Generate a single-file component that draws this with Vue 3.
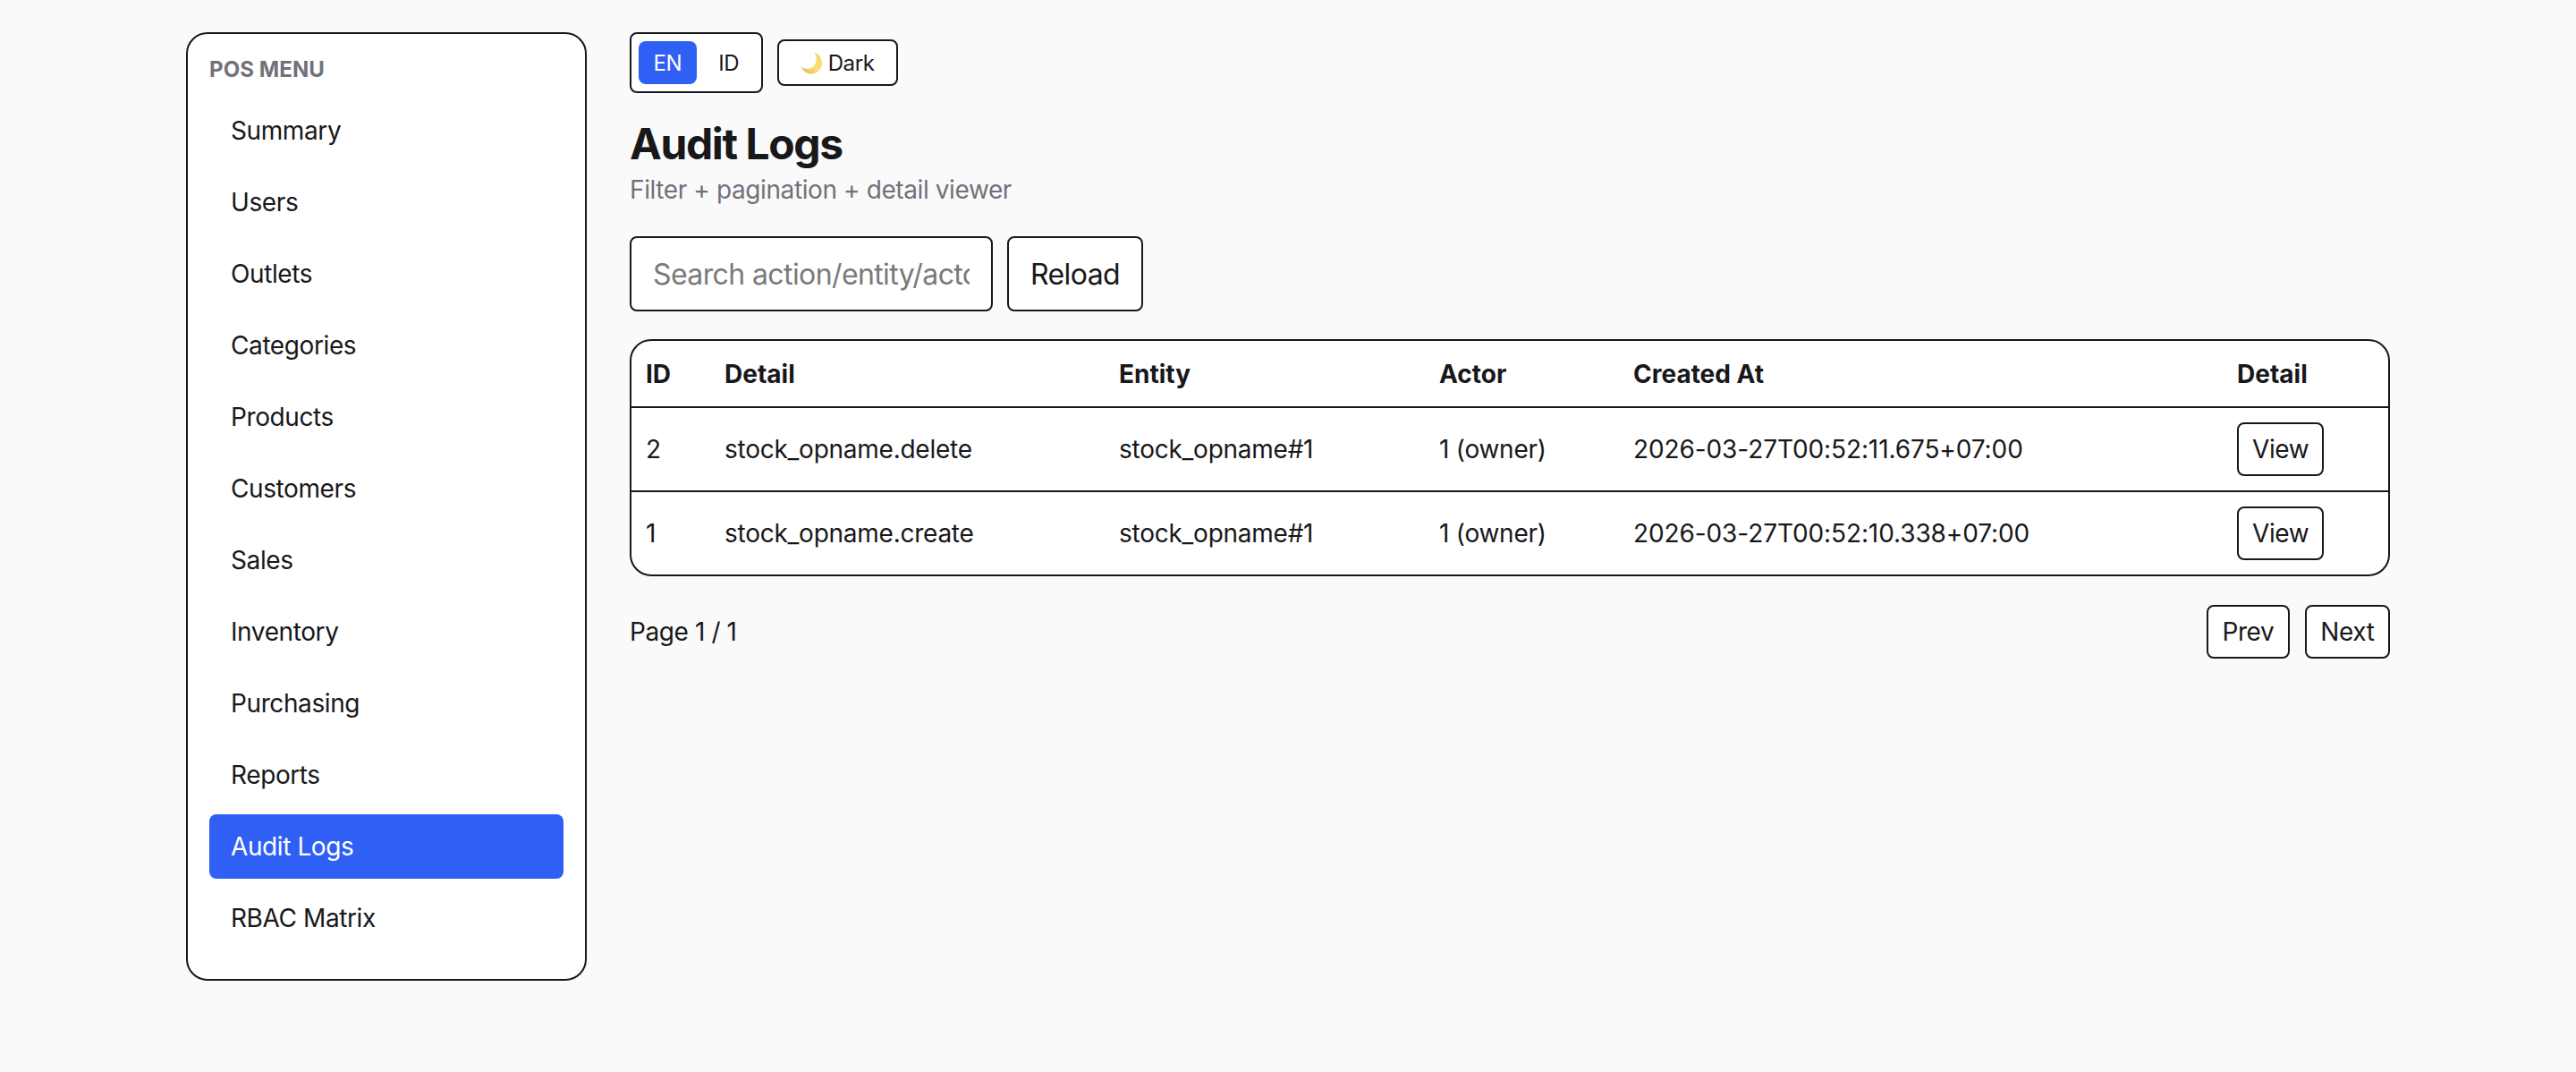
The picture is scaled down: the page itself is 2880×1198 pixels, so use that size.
<script setup>
const navItems = ['Summary', 'Users', 'Outlets', 'Categories', 'Products', 'Customers', 'Sales', 'Inventory', 'Purchasing', 'Reports', 'Audit Logs', 'RBAC Matrix']
const logs = [
  { id: 2, action: 'stock_opname.delete', entity: 'stock_opname#1', actor: '1 (owner)', created: '2026-03-27T00:52:11.675+07:00' },
  { id: 1, action: 'stock_opname.create', entity: 'stock_opname#1', actor: '1 (owner)', created: '2026-03-27T00:52:10.338+07:00' }
]
</script>

<template>
  <div class="layout">
    <aside class="sidebar">
      <div class="menu-title">POS MENU</div>
      <nav class="nav">
        <a v-for="item in navItems" :key="item" class="nav-item" :class="{ active: item === 'Audit Logs' }">{{ item }}</a>
      </nav>
    </aside>

    <main class="main">
      <div class="toolbar">
        <div class="lang">
          <button class="lang-btn active">EN</button>
          <button class="lang-btn">ID</button>
        </div>
        <button class="theme-btn">
          <svg class="moon" width="24" height="25" viewBox="0 0 24 25">
            <defs>
              <linearGradient id="moonFill" x1="0.8" y1="0.1" x2="0.3" y2="1">
                <stop offset="0" stop-color="#f3d769" />
                <stop offset="0.6" stop-color="#f8e07c" />
                <stop offset="1" stop-color="#e9bf4c" />
              </linearGradient>
            </defs>
            <path d="M15.5 0.5 C20.5 2 24 7 24 12.5 C24 19 18.5 24.5 12 24.5 C7 24.5 2.5 21 0.5 16.5 C4 19 9.5 20 13.5 17 C18 13.5 19 6 15.5 0.5 Z" fill="url(#moonFill)" />
          </svg>
          <span>Dark</span>
        </button>
      </div>

      <h1 class="title">Audit Logs</h1>
      <p class="subtitle">Filter + pagination + detail viewer</p>

      <div class="filters">
        <input class="search" type="text" placeholder="Search action/entity/actor" />
        <button class="reload">Reload</button>
      </div>

      <div class="table-wrap">
        <table class="table">
          <colgroup>
            <col class="c-id" />
            <col class="c-action" />
            <col class="c-entity" />
            <col class="c-actor" />
            <col class="c-created" />
            <col />
          </colgroup>
          <thead>
            <tr>
              <th>ID</th>
              <th>Detail</th>
              <th>Entity</th>
              <th>Actor</th>
              <th>Created At</th>
              <th>Detail</th>
            </tr>
          </thead>
          <tbody>
            <tr v-for="log in logs" :key="log.id">
              <td>{{ log.id }}</td>
              <td>{{ log.action }}</td>
              <td>{{ log.entity }}</td>
              <td>{{ log.actor }}</td>
              <td class="created">{{ log.created }}</td>
              <td><button class="small-btn view">View</button></td>
            </tr>
          </tbody>
        </table>
      </div>

      <div class="pager">
        <span>Page 1 / 1</span>
        <div class="pager-btns">
          <button class="small-btn">Prev</button>
          <button class="small-btn">Next</button>
        </div>
      </div>
    </main>
  </div>
</template>

<style>
html, body {
  background: #fafafa;
}
</style>

<style scoped>
.layout {
  display: flex;
  gap: 48px;
  align-items: flex-start;
  width: 2464px;
  margin: 0 auto;
  padding-top: 36px;
  font-family: Inter, "Liberation Sans", sans-serif;
  font-size: 28px;
  letter-spacing: -0.4px;
  color: #18181b;
}

.sidebar {
  flex: 0 0 448px;
  box-sizing: border-box;
  height: 1060px;
  padding: 24px;
  background: #fff;
  border: 2px solid #18181b;
  border-radius: 24px;
}

.menu-title {
  margin-bottom: 16px;
  font-size: 24px;
  line-height: 32px;
  font-weight: 700;
  letter-spacing: 0.1px;
  color: #71717a;
}

.nav {
  display: flex;
  flex-direction: column;
  gap: 8px;
}

.nav-item {
  height: 72px;
  padding: 0 24px;
  line-height: 72px;
  border-radius: 8px;
}

.nav-item.active {
  background: #2f5ff5;
  color: #fff;
}

.main {
  flex: 1;
  min-width: 0;
}

.toolbar {
  display: flex;
  align-items: center;
  gap: 16px;
}

.lang {
  display: flex;
  gap: 8px;
  padding: 8px;
  background: #fff;
  border: 2px solid #18181b;
  border-radius: 8px;
}

button {
  font-family: inherit;
  letter-spacing: inherit;
  color: inherit;
  cursor: pointer;
}

.lang-btn {
  height: 48px;
  padding: 0 16.5px;
  border: none;
  border-radius: 8px;
  background: transparent;
  font-size: 24px;
}

.lang-btn.active {
  background: #2f5ff5;
  color: #fff;
}

.theme-btn {
  display: flex;
  align-items: center;
  gap: 7px;
  height: 52px;
  padding: 0 25px 0 24px;
  background: #fff;
  border: 2px solid #18181b;
  border-radius: 8px;
  font-size: 24px;
}

.title {
  margin: 29px 0 0;
  font-size: 48px;
  line-height: 56px;
  font-weight: 700;
  letter-spacing: -1.4px;
}

.subtitle {
  margin: 5px 0 0;
  font-size: 28px;
  line-height: 36px;
  color: #71717a;
}

.filters {
  display: flex;
  gap: 16px;
  margin-top: 34px;
}

.search {
  box-sizing: border-box;
  width: 406px;
  height: 84px;
  padding: 0 24px;
  background: #fff;
  border: 2px solid #18181b;
  border-radius: 8px;
  font-family: inherit;
  font-size: 32px;
  letter-spacing: -0.6px;
}

.search::placeholder {
  color: #7a7a7a;
}

.reload {
  height: 84px;
  padding: 0 24px;
  background: #fff;
  border: 2px solid #18181b;
  border-radius: 8px;
  font-size: 32px;
  letter-spacing: -0.6px;
}

.table-wrap {
  margin-top: 31px;
  background: #fff;
  border: 2px solid #18181b;
  border-radius: 24px;
  overflow: hidden;
}

.table {
  width: 100%;
  border-collapse: collapse;
  table-layout: fixed;
}

.c-id { width: 88px; }
.c-action { width: 441px; }
.c-entity { width: 358px; }
.c-actor { width: 217px; }
.c-created { width: 675px; }

th, td {
  padding: 0 16px;
  text-align: left;
}

th {
  height: 73px;
  font-weight: 700;
  letter-spacing: 0;
}

td {
  height: 92px;
  border-top: 2px solid #18181b;
  letter-spacing: -0.25px;
}

td.created {
  letter-spacing: -0.1px;
}

.small-btn {
  height: 60px;
  padding: 0 15px;
  background: #fff;
  border: 2px solid #18181b;
  border-radius: 8px;
  font-size: 28px;
}

.view {
  display: block;
  letter-spacing: -0.4px;
}

.pager {
  display: flex;
  justify-content: space-between;
  align-items: center;
  margin-top: 32px;
}

.pager-btns {
  display: flex;
  gap: 17px;
}

.pager-btns .small-btn {
  padding: 0 15.5px;
}
</style>
